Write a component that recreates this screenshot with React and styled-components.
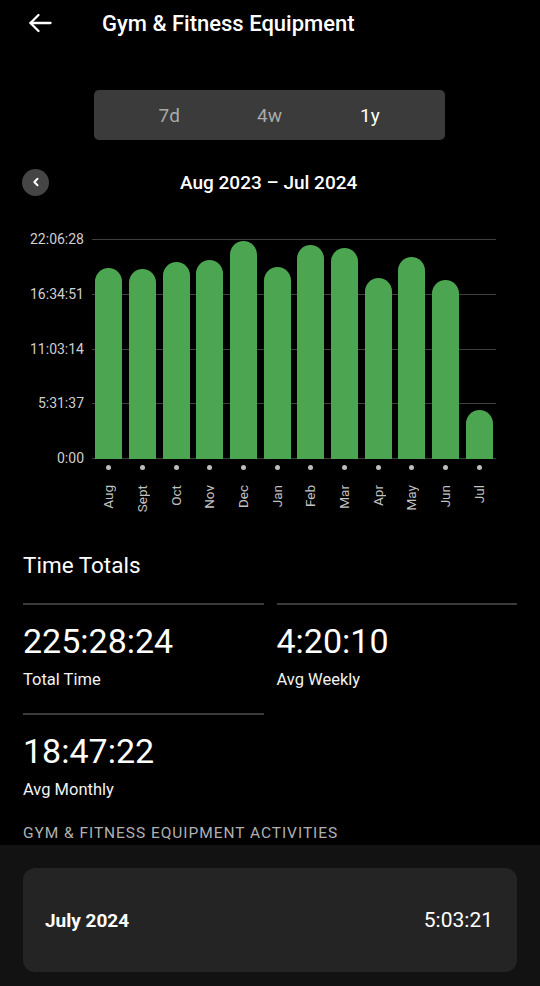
import React, { useState } from 'react';
import styled, { createGlobalStyle } from 'styled-components';

const GlobalStyle = createGlobalStyle`
  html, body {
    margin: 0;
    padding: 0;
    background: #000;
  }
  body {
    font-family: Roboto, "Noto Sans", "Liberation Sans", sans-serif;
    color: #fff;
  }
`;

const months = [
  { name: 'Aug', value: 191 },
  { name: 'Sept', value: 190 },
  { name: 'Oct', value: 197 },
  { name: 'Nov', value: 199 },
  { name: 'Dec', value: 218 },
  { name: 'Jan', value: 192 },
  { name: 'Feb', value: 214 },
  { name: 'Mar', value: 211 },
  { name: 'Apr', value: 181 },
  { name: 'May', value: 202 },
  { name: 'Jun', value: 179 },
  { name: 'Jul', value: 49 },
];
const axis = ['22:06:28', '16:34:51', '11:03:14', '5:31:37', '0:00'];
const PLOT_H = 219;

export default function App() {
  const [range, setRange] = useState('1y');
  return (
    <Page>
      <GlobalStyle />
      <Header>
        <BackButton aria-label="back">
          <svg width="24" height="20" viewBox="0 0 24 20" fill="none" stroke="#fff" strokeWidth="2.3" strokeLinecap="round" strokeLinejoin="round">
            <path d="M22.5 10H2.5" />
            <path d="M10.5 2L2.5 10l8 8" />
          </svg>
        </BackButton>
        <Title>Gym &amp; Fitness Equipment</Title>
      </Header>

      <Segmented>
        {['7d', '4w', '1y'].map((r) => (
          <Segment key={r} active={range === r} onClick={() => setRange(r)}>
            {r}
          </Segment>
        ))}
      </Segmented>

      <DateNav>
        <RoundButton aria-label="previous">
          <svg width="10" height="10" viewBox="0 0 10 10" fill="none" stroke="#fff" strokeWidth="2" strokeLinecap="round" strokeLinejoin="round">
            <path d="M6.5 1.8L3.3 5l3.2 3.2" />
          </svg>
        </RoundButton>
        <DateLabel>Aug 2023 – Jul 2024</DateLabel>
      </DateNav>

      <Chart>
        <YAxis>
          {axis.map((a) => (
            <YLabel key={a}>{a}</YLabel>
          ))}
        </YAxis>
        <PlotColumn>
          <Plot>
            {months.map((m) => (
              <BarSlot key={m.name}>
                <Bar style={{ height: `${m.value}px` }} />
              </BarSlot>
            ))}
          </Plot>
          <XAxis>
            {months.map((m) => (
              <Tick key={m.name}>
                <Dot />
                <XLabel>{m.name}</XLabel>
              </Tick>
            ))}
          </XAxis>
        </PlotColumn>
      </Chart>

      <Section>
        <SectionTitle>Time Totals</SectionTitle>
        <Stats>
          <Stat>
            <StatValue>225:28:24</StatValue>
            <StatLabel>Total Time</StatLabel>
          </Stat>
          <Stat>
            <StatValue>4:20:10</StatValue>
            <StatLabel>Avg Weekly</StatLabel>
          </Stat>
          <Stat>
            <StatValue>18:47:22</StatValue>
            <StatLabel>Avg Monthly</StatLabel>
          </Stat>
        </Stats>
        <Caption>Gym &amp; Fitness Equipment Activities</Caption>
      </Section>

      <Activities>
        <ActivityCard>
          <ActivityMonth>July 2024</ActivityMonth>
          <ActivityTime>5:03:21</ActivityTime>
        </ActivityCard>
      </Activities>
    </Page>
  );
}

const Page = styled.div`
  width: 540px;
  min-height: 986px;
  display: flex;
  flex-direction: column;
  background: #000;
`;

const Header = styled.header`
  height: 46px;
  display: flex;
  align-items: center;
  padding: 0 0 0 28px;
`;

const BackButton = styled.button`
  background: none;
  border: 0;
  padding: 0;
  width: 24px;
  height: 20px;
  display: flex;
  margin-right: 50px;
  cursor: pointer;
`;

const Title = styled.h1`
  margin: 0;
  font-size: 22px;
  font-weight: 500;
  color: #fff;
`;

const Segmented = styled.div`
  margin: 44px 0 0 94px;
  width: 351px;
  height: 50px;
  box-sizing: border-box;
  padding: 0 25px;
  border-radius: 5px;
  background: #3b3b3b;
  display: grid;
  grid-template-columns: repeat(3, 1fr);
`;

const Segment = styled.button`
  background: none;
  border: 0;
  font-family: inherit;
  font-size: 19px;
  padding-top: 2px;
  color: ${(p) => (p.active ? '#fff' : '#a9a9a9')};
  cursor: pointer;
`;

const DateNav = styled.div`
  margin-top: 28px;
  height: 28px;
  display: flex;
  align-items: center;
  padding-left: 22px;
`;

const RoundButton = styled.button`
  width: 27px;
  height: 27px;
  border-radius: 50%;
  border: 0;
  padding: 0;
  background: #454545;
  display: flex;
  align-items: center;
  justify-content: center;
`;

const DateLabel = styled.div`
  margin-left: 131px;
  font-size: 19px;
  font-weight: 500;
  color: #fff;
`;

const Chart = styled.div`
  margin-top: 43px;
  display: flex;
`;

const YAxis = styled.div`
  width: 84px;
  height: ${PLOT_H + 16}px;
  margin-top: -8px;
  display: flex;
  flex-direction: column;
  justify-content: space-between;
  align-items: flex-end;
`;

const YLabel = styled.span`
  height: 16px;
  line-height: 16px;
  font-size: 14px;
  color: #cfcfcf;
`;

const PlotColumn = styled.div`
  margin-left: 8px;
  width: 404px;
`;

const Plot = styled.div`
  height: ${PLOT_H + 1}px;
  display: grid;
  grid-template-columns: repeat(12, 1fr);
  align-items: end;
  background-image: repeating-linear-gradient(
    to bottom,
    #3e3e3e 0,
    #3e3e3e 1px,
    transparent 1px,
    transparent ${PLOT_H / 4}px
  );
`;

const BarSlot = styled.div`
  display: flex;
  justify-content: center;
  align-items: flex-end;
  height: 100%;
`;

const Bar = styled.div`
  width: 27px;
  background: #4ca651;
  border-radius: 13.5px 13.5px 0 0;
`;

const XAxis = styled.div`
  display: grid;
  grid-template-columns: repeat(12, 1fr);
  padding-top: 6px;
`;

const Tick = styled.div`
  display: flex;
  flex-direction: column;
  align-items: center;
`;

const Dot = styled.span`
  width: 5px;
  height: 5px;
  border-radius: 50%;
  background: #bdbdbd;
`;

const XLabel = styled.span`
  margin-top: 15px;
  writing-mode: vertical-rl;
  transform: rotate(180deg);
  font-size: 13.5px;
  line-height: 15px;
  color: #c2c2c2;
`;

const Section = styled.section`
  padding: 0 23px;
  margin-top: 38px;
`;

const SectionTitle = styled.h2`
  margin: 0;
  font-size: 22.5px;
  font-weight: 400;
  color: #fff;
  line-height: 30px;
`;

const Stats = styled.div`
  margin-top: 23px;
  display: grid;
  grid-template-columns: 1fr 1fr;
  column-gap: 13px;
`;

const Stat = styled.div`
  border-top: 2px solid #3a3a3a;
  height: 110px;
  padding-top: 16px;
  box-sizing: border-box;
`;

const StatValue = styled.div`
  font-size: 34px;
  line-height: 40px;
  color: #fff;
`;

const StatLabel = styled.div`
  margin-top: 9px;
  font-size: 16.5px;
  line-height: 20px;
  color: #f2f2f2;
`;

const Caption = styled.div`
  font-size: 15.5px;
  line-height: 20px;
  letter-spacing: 0.95px;
  text-transform: uppercase;
  color: #b0b0b0;
`;

const Activities = styled.div`
  margin-top: 2px;
  flex: 1;
  background: #121212;
  padding: 23px 23px 14px;
`;

const ActivityCard = styled.div`
  height: 104px;
  border-radius: 12px;
  background: #242424;
  display: flex;
  align-items: center;
  justify-content: space-between;
  padding: 0 24px 0 22px;
`;

const ActivityMonth = styled.div`
  font-size: 19px;
  font-weight: 700;
  color: #fff;
`;

const ActivityTime = styled.div`
  font-size: 21px;
  color: #fff;
`;
